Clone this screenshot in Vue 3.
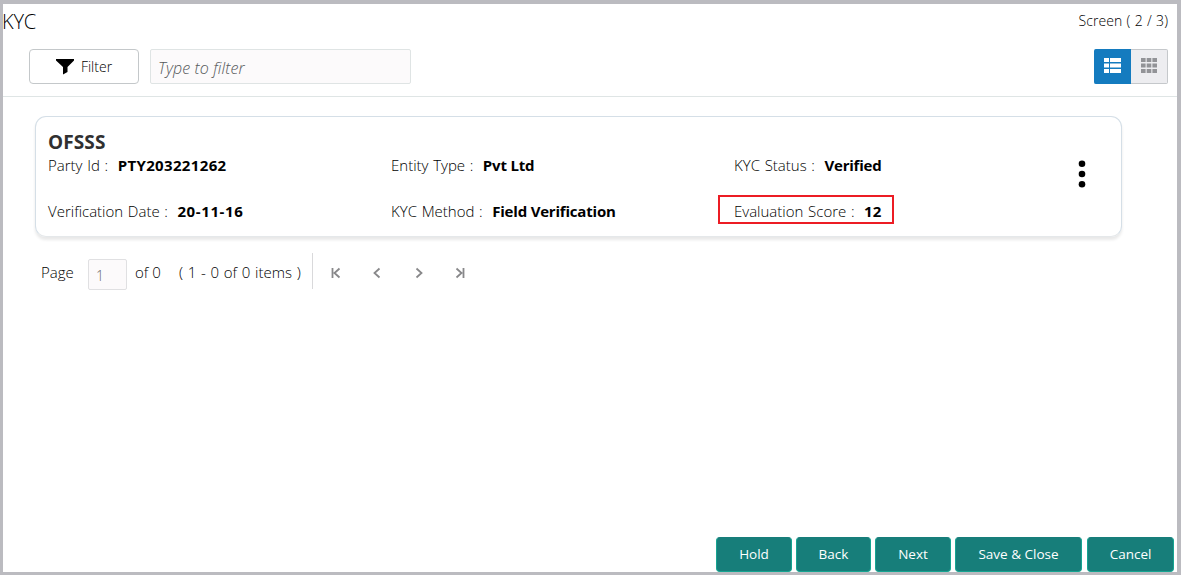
<script setup>
import { ref } from 'vue';

const view = ref('list');
const filterText = ref('');
const page = ref('1');

const fields = [
  { label: 'Party Id :', value: 'PTY203221262', name: 'party' },
  { label: 'Entity Type :', value: 'Pvt Ltd', name: 'entity' },
  { label: 'KYC Status :', value: 'Verified', name: 'status' },
  { label: 'Verification Date :', value: '20-11-16', name: 'date' },
  { label: 'KYC Method :', value: 'Field Verification', name: 'method' },
  { label: 'Evaluation Score :', value: '12', name: 'score' },
];

const pagerIcons = [
  'M1.5 1v10M8.5 1.5L3.5 6l5 4.5',
  'M7.5 1.5L2.5 6l5 4.5',
  'M2.5 1.5l5 4.5-5 4.5',
  'M1.5 1.5l5 4.5-5 4.5M8.5 1v10',
];

const actions = [
  { label: 'Hold', name: 'hold' },
  { label: 'Back', name: 'back' },
  { label: 'Next', name: 'next' },
  { label: 'Save & Close', name: 'save' },
  { label: 'Cancel', name: 'cancel' },
];
</script>

<template>
  <div class="screen">
    <header class="title-row">
      <h1>KYC</h1>
      <span class="step">Screen ( 2 / 3)</span>
    </header>

    <div class="toolbar">
      <button class="filter-btn">
        <svg width="18" height="16" viewBox="0 0 18 16"><path d="M0 0h18v1.5L11.5 8v5L7 15.5V8L0 1.5z" /></svg>
        <span>Filter</span>
      </button>
      <input v-model="filterText" class="filter-input" placeholder="Type to filter" />
      <div class="views">
        <button :class="{ active: view === 'list' }" @click="view = 'list'">
          <svg width="17" height="15" viewBox="0 0 17 15"><path d="M0 0h5v4H0zM6 0h11v4H6zM0 5.5h5v4H0zM6 5.5h11v4H6zM0 11h5v4H0zM6 11h11v4H6z" /></svg>
        </button>
        <button :class="{ active: view === 'grid' }" @click="view = 'grid'">
          <svg width="16" height="15" viewBox="0 0 16 15"><path d="M0 0h4.6v4H0zM5.7 0h4.6v4H5.7zM11.4 0H16v4h-4.6zM0 5.5h4.6v4H0zM5.7 5.5h4.6v4H5.7zM11.4 5.5H16v4h-4.6zM0 11h4.6v4H0zM5.7 11h4.6v4H5.7zM11.4 11H16v4h-4.6z" /></svg>
        </button>
      </div>
    </div>

    <section class="card">
      <div class="card-body">
        <h2>OFSSS</h2>
        <div class="fields">
          <div v-for="field in fields" :key="field.name" class="field" :class="field.name">
            <span class="label">{{ field.label }}</span>
            <b>{{ field.value }}</b>
          </div>
        </div>
      </div>
      <button class="more">
        <svg width="8" height="28" viewBox="0 0 8 28"><circle cx="4" cy="3.7" r="3.3" /><circle cx="4" cy="14" r="3.3" /><circle cx="4" cy="24.3" r="3.3" /></svg>
      </button>
    </section>

    <nav class="pager">
      <span class="page-label">Page</span>
      <input v-model="page" class="page-input" />
      <span class="page-of">of 0</span>
      <span class="page-items">( 1 - 0 of 0 items )</span>
      <div class="arrows">
        <button v-for="icon in pagerIcons" :key="icon">
          <svg width="10" height="12" viewBox="0 0 10 12"><path :d="icon" /></svg>
        </button>
      </div>
    </nav>

    <footer class="actions">
      <button v-for="action in actions" :key="action.name" :class="action.name">{{ action.label }}</button>
    </footer>
  </div>
</template>

<style>
body {
  margin: 0;
  overflow: hidden;
}
</style>

<style scoped>
.screen {
  display: flex;
  flex-direction: column;
  box-sizing: border-box;
  width: 100vw;
  height: 100vh;
  border: solid #bbbbc0;
  border-width: 4px 4px 3px 3px;
  background: #fff;
  color: #000;
  font-family: "Open Sans", "Noto Sans", sans-serif;
  font-size: 15px;
  font-weight: 300;
  white-space: nowrap;
}

button,
input {
  box-sizing: border-box;
  margin: 0;
  padding: 0;
  font: inherit;
  color: inherit;
}

svg {
  display: block;
  flex: none;
}

.title-row {
  display: flex;
  justify-content: space-between;
  height: 45px;
  padding-right: 9px;
}

h1 {
  margin: 0 0 0 -1px;
  font-size: 20px;
  font-weight: 300;
  line-height: 35px;
  letter-spacing: -0.2px;
}

.step {
  font-size: 14px;
  line-height: 34px;
  letter-spacing: 0.05px;
  word-spacing: 0.6px;
}

.toolbar {
  display: flex;
  box-sizing: border-box;
  height: 48px;
  padding: 0 9px 0 26px;
  border-bottom: 1px solid #dfe5e5;
}

.filter-btn {
  display: flex;
  align-items: center;
  justify-content: center;
  gap: 7px;
  width: 110px;
  height: 35px;
  border: 1px solid #c4c8ca;
  border-radius: 4px;
  background: #fff;
  font-size: 14px;
  letter-spacing: 0;
}

.filter-input {
  width: 261px;
  height: 35px;
  margin-left: 11px;
  padding: 2px 7px 0;
  border: 1px solid #dfe4e4;
  border-radius: 2px;
  background: #fcfafb;
  font-size: 16px;
  font-style: italic;
  letter-spacing: 0.12px;
}

.filter-input::placeholder {
  color: #55585a;
  opacity: 1;
}

.views {
  display: flex;
  margin-left: auto;
}

.views button {
  display: flex;
  align-items: center;
  justify-content: center;
  width: 37px;
  height: 35px;
  padding-bottom: 2px;
  border: 1px solid #c5c8cb;
  border-left: 0;
  border-radius: 0 2px 2px 0;
  background: #ededf0;
  fill: #929397;
}

.views .active {
  border-color: #147bbf;
  border-radius: 2px 0 0 2px;
  background: #147bbf;
  fill: #fff;
}

.card {
  display: flex;
  box-sizing: border-box;
  width: 1087px;
  height: 121px;
  margin: 19px 0 0 32px;
  padding: 13px 35px 0 12px;
  border: 1px solid #d5dfe7;
  border-bottom-color: #e5e8ea;
  border-radius: 11px;
  box-shadow: 0 3px 3px #e9e9e9;
}

.card-body {
  flex: 1;
}

h2 {
  margin: 0;
  color: #303030;
  font-size: 19px;
  font-weight: 700;
  line-height: 24px;
  letter-spacing: 0.1px;
}

.fields {
  display: grid;
  grid-template-columns: 343px 343px 1fr;
  row-gap: 24px;
}

.field {
  display: flex;
  gap: 9.5px;
  height: 22px;
  line-height: 22px;
  position: relative;
}

.label {
  letter-spacing: 0;
  word-spacing: 0.8px;
}

.field b {
  color: #000;
  font-weight: 700;
  letter-spacing: -0.2px;
}

.party b {
  letter-spacing: 0.35px;
}

.date b {
  letter-spacing: 0.6px;
}

.score b {
  letter-spacing: 0.2px;
}

/* red outline around the score, drawn over the card */
.score::after {
  content: "";
  position: absolute;
  top: -5px;
  left: -16px;
  width: 172px;
  height: 25px;
  border: 2px solid #ec1c24;
}

.more {
  display: flex;
  align-self: flex-start;
  margin-top: 30px;
  border: 0;
  background: none;
}

.pager {
  display: flex;
  align-items: center;
  height: 36px;
  margin: 16px 0 0 38px;
}

.pager span {
  box-sizing: border-box;
  padding-top: 2px;
}

.page-label {
  width: 47px;
}

.page-input {
  width: 39px;
  height: 31px;
  margin-top: 6px;
  padding: 2px 0 0 7px;
  border: 1px solid #e0e0e2;
  border-radius: 2px;
  background: #fcfafb;
  color: #666;
  font-size: 14px;
}

.page-of {
  width: 52px;
  padding-left: 8px;
}

.page-items {
  width: 133px;
  word-spacing: 0.8px;
}

.arrows {
  display: flex;
  box-sizing: border-box;
  height: 36px;
  padding-left: 2px;
  border-left: 1px solid #d9d9db;
}

.arrows button {
  display: flex;
  align-items: center;
  justify-content: center;
  width: 41.5px;
  padding-top: 3px;
  border: 0;
  background: none;
}

.arrows path {
  fill: none;
  stroke: #88888a;
  stroke-width: 1.8;
}

.actions {
  display: flex;
  justify-content: flex-end;
  gap: 4px;
  margin-top: auto;
  padding-right: 3px;
}

.actions button {
  width: 76px;
  height: 35px;
  padding-bottom: 1px;
  border: 1px solid #16a491;
  border-top-color: #177e7a;
  border-radius: 4px;
  background: #177e7a;
  color: #fff;
  font-size: 13.5px;
  font-weight: 400;
}

.actions .back {
  width: 75px;
}

.actions .save {
  width: 127px;
  margin-right: 1px;
}

.actions .cancel {
  width: 87px;
}
</style>
